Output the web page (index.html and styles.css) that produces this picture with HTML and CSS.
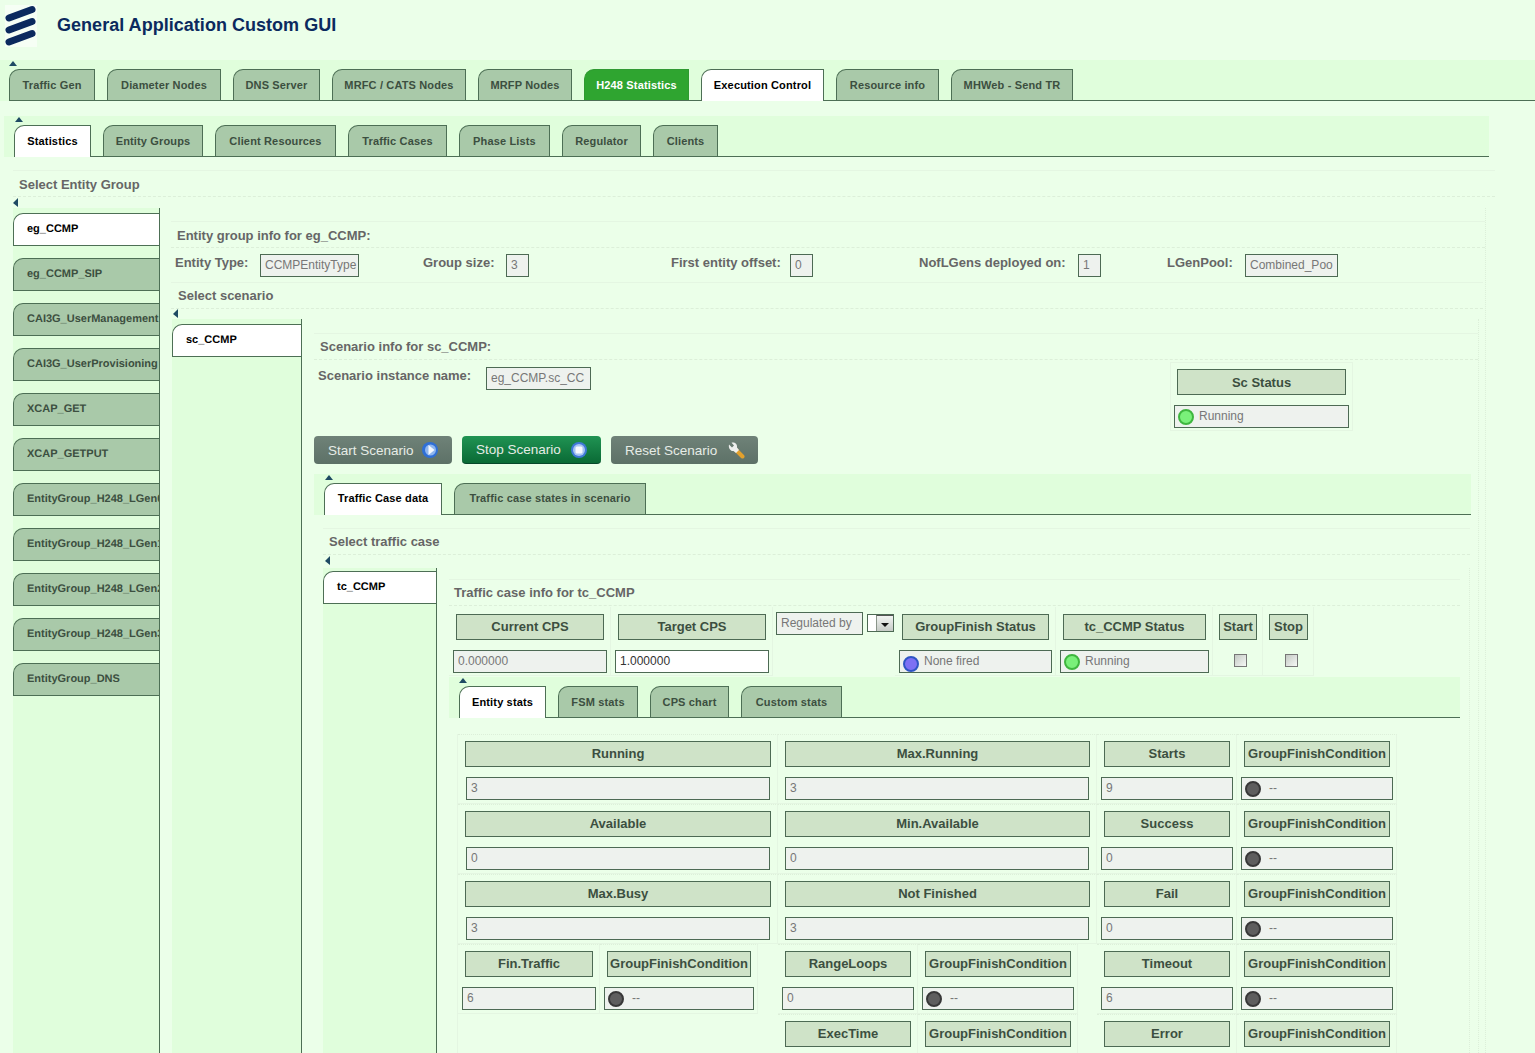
FILE: index.html
```html
<!DOCTYPE html>
<html lang="en">
<head>
    <meta charset="UTF-8">
    <title>General Application Custom GUI</title>
    <link rel="stylesheet" href="styles.css">
</head>
<body>
<div class="page">
    <header class="app-header">
        <svg class="logo" width="32" height="42" viewBox="0 0 32 42">
            <rect width="32" height="42" fill="#f6fff5"/>
            <path d="M4 13 L27 4.5 M4 25 L27 16.5 M4 37 L27 28.5" stroke="#0b2a5e" stroke-width="7" stroke-linecap="round"/>
        </svg>
        <h1>General Application Custom GUI</h1>
    </header>

    <nav class="tabbar tabbar-main">
        <span class="arrow-up"></span>
        <div class="tablist">
            <a class="tab">Traffic Gen</a>
            <a class="tab">Diameter Nodes</a>
            <a class="tab">DNS Server</a>
            <a class="tab">MRFC / CATS Nodes</a>
            <a class="tab">MRFP Nodes</a>
            <a class="tab tab-hot">H248 Statistics</a>
            <a class="tab tab-active">Execution Control</a>
            <a class="tab">Resource info</a>
            <a class="tab">MHWeb - Send TR</a>
        </div>
    </nav>

    <nav class="tabbar tabbar-sub">
        <span class="arrow-up"></span>
        <div class="tablist">
            <a class="tab tab-active">Statistics</a>
            <a class="tab">Entity Groups</a>
            <a class="tab">Client Resources</a>
            <a class="tab">Traffic Cases</a>
            <a class="tab">Phase Lists</a>
            <a class="tab">Regulator</a>
            <a class="tab">Clients</a>
        </div>
    </nav>

    <div class="caption caption-top">Select Entity Group</div>
    <span class="arrow-left arrow-l1"></span>

    <div class="split">
        <div class="vtabs vtabs-l1">
            <a class="vtab vtab-active">eg_CCMP</a>
            <a class="vtab">eg_CCMP_SIP</a>
            <a class="vtab">CAI3G_UserManagement</a>
            <a class="vtab">CAI3G_UserProvisioning</a>
            <a class="vtab">XCAP_GET</a>
            <a class="vtab">XCAP_GETPUT</a>
            <a class="vtab">EntityGroup_H248_LGen0</a>
            <a class="vtab">EntityGroup_H248_LGen1</a>
            <a class="vtab">EntityGroup_H248_LGen2</a>
            <a class="vtab">EntityGroup_H248_LGen3</a>
            <a class="vtab">EntityGroup_DNS</a>
        </div>

        <div class="content content-l1">
            <div class="caption caption-entity">Entity group info for eg_CCMP:</div>
            <div class="info-row">
                <div class="info-item"><label>Entity Type:</label><input class="field w-type" readonly value="CCMPEntityType"></div>
                <div class="info-item"><label>Group size:</label><input class="field w-small" readonly value="3"></div>
                <div class="info-item"><label>First entity offset:</label><input class="field w-small" readonly value="0"></div>
                <div class="info-item"><label>NofLGens deployed on:</label><input class="field w-small" readonly value="1"></div>
                <div class="info-item"><label>LGenPool:</label><input class="field w-pool" readonly value="Combined_Poo"></div>
            </div>
            <div class="caption caption-scenario">Select scenario</div>
            <span class="arrow-left arrow-l2"></span>

            <div class="split">
                <div class="vtabs vtabs-l2">
                    <a class="vtab vtab-active">sc_CCMP</a>
                </div>

                <div class="content content-l2">
                    <div class="caption caption-info">Scenario info for sc_CCMP:</div>
                    <div class="scenario-row">
                        <div class="scenario-name">
                            <label>Scenario instance name:</label>
                            <input class="field w-name" readonly value="eg_CCMP.sc_CC">
                        </div>
                        <div class="cell status-box">
                            <div class="cell-head">Sc Status</div>
                            <div class="field field-status"><span class="dot dot-green"></span>Running</div>
                        </div>
                    </div>

                    <div class="button-row">
                        <button class="btn btn-start" type="button">Start Scenario
                            <svg width="16" height="16" viewBox="0 0 16 16"><circle cx="8" cy="8" r="8" fill="#2f6fd6"/><circle cx="8.5" cy="8" r="5.5" fill="#8fb6ee"/><path d="M6.5 3 L12.5 8 L6.5 13 Z" fill="#f4f8ff"/></svg>
                        </button>
                        <button class="btn btn-stop" type="button">Stop Scenario
                            <svg width="16" height="16" viewBox="0 0 16 16"><circle cx="8" cy="8" r="8" fill="#3f78d8"/><circle cx="8" cy="8" r="6" fill="#a6c4f2"/><rect x="4.5" y="4.5" width="7" height="7" rx="1.5" fill="#f6f9ff"/></svg>
                        </button>
                        <button class="btn btn-reset" type="button">Reset Scenario
                            <svg width="17" height="17" viewBox="0 0 17 17"><path d="M8 8 L14.5 14.5" stroke="#e3a12c" stroke-width="4" stroke-linecap="round"/><path d="M1 2.5 L4 5.5 L6 3.5 L3.5 .8 C6.5 0 9.5 2 9 5.5 L11 8 L8 11 L5.5 9 C2.5 9.5 .2 6 1 2.5 Z" fill="#eef0ee"/></svg>
                        </button>
                    </div>

                    <nav class="tabbar tabbar-scenario">
                        <span class="arrow-up"></span>
                        <div class="tablist">
                            <a class="tab tab-active">Traffic Case data</a>
                            <a class="tab">Traffic case states in scenario</a>
                        </div>
                    </nav>

                    <div class="caption caption-traffic">Select traffic case</div>
                    <span class="arrow-left arrow-l3"></span>

                    <div class="split">
                        <div class="vtabs vtabs-l3">
                            <a class="vtab vtab-active">tc_CCMP</a>
                        </div>

                        <div class="content content-l3">
                            <div class="caption caption-case">Traffic case info for tc_CCMP</div>

                            <div class="case-grid">
                                <div class="cell">
                                    <div class="cell-head">Current CPS</div>
                                    <input class="field" readonly value="0.000000">
                                </div>
                                <div class="cell">
                                    <div class="cell-head">Target CPS</div>
                                    <input class="field field-live" value="1.000000">
                                </div>
                                <div class="regulated">
                                    <input class="field w-regulated" readonly value="Regulated by">
                                    <div class="drop"><span class="drop-btn"></span></div>
                                </div>
                                <div class="cell">
                                    <div class="cell-head">GroupFinish Status</div>
                                    <div class="field field-status"><span class="dot dot-blue"></span>None fired</div>
                                </div>
                                <div class="cell">
                                    <div class="cell-head">tc_CCMP Status</div>
                                    <div class="field field-status"><span class="dot dot-green"></span>Running</div>
                                </div>
                                <div class="cell cell-narrow">
                                    <div class="cell-head">Start</div>
                                    <input class="check" type="checkbox">
                                </div>
                                <div class="cell cell-narrow">
                                    <div class="cell-head">Stop</div>
                                    <input class="check" type="checkbox">
                                </div>
                            </div>

                            <nav class="tabbar tabbar-case">
                                <span class="arrow-up"></span>
                                <div class="tablist">
                                    <a class="tab tab-active">Entity stats</a>
                                    <a class="tab">FSM stats</a>
                                    <a class="tab">CPS chart</a>
                                    <a class="tab">Custom stats</a>
                                </div>
                            </nav>

                            <div class="stats-grid">
                                <div class="cell span-3"><div class="cell-head">Running</div><input class="field field-wide" readonly value="3"></div>
                                <div class="cell span-3"><div class="cell-head">Max.Running</div><input class="field field-wide2" readonly value="3"></div>
                                <div class="cell"><div class="cell-head">Starts</div><input class="field" readonly value="9"></div>
                                <div class="cell"><div class="cell-head">GroupFinishCondition</div><div class="field field-status"><span class="dot dot-off"></span>--</div></div>

                                <div class="cell span-3"><div class="cell-head">Available</div><input class="field field-wide" readonly value="0"></div>
                                <div class="cell span-3"><div class="cell-head">Min.Available</div><input class="field field-wide2" readonly value="0"></div>
                                <div class="cell"><div class="cell-head">Success</div><input class="field" readonly value="0"></div>
                                <div class="cell"><div class="cell-head">GroupFinishCondition</div><div class="field field-status"><span class="dot dot-off"></span>--</div></div>

                                <div class="cell span-3"><div class="cell-head">Max.Busy</div><input class="field field-wide" readonly value="3"></div>
                                <div class="cell span-3"><div class="cell-head">Not Finished</div><input class="field field-wide2" readonly value="3"></div>
                                <div class="cell"><div class="cell-head">Fail</div><input class="field" readonly value="0"></div>
                                <div class="cell"><div class="cell-head">GroupFinishCondition</div><div class="field field-status"><span class="dot dot-off"></span>--</div></div>

                                <div class="cell"><div class="cell-head">Fin.Traffic</div><input class="field" readonly value="6"></div>
                                <div class="cell"><div class="cell-head">GroupFinishCondition</div><div class="field field-status"><span class="dot dot-off"></span>--</div></div>
                                <div class="stats-gap"></div>
                                <div class="cell"><div class="cell-head">RangeLoops</div><input class="field" readonly value="0"></div>
                                <div class="cell"><div class="cell-head">GroupFinishCondition</div><div class="field field-status"><span class="dot dot-off"></span>--</div></div>
                                <div class="stats-gap"></div>
                                <div class="cell"><div class="cell-head">Timeout</div><input class="field" readonly value="6"></div>
                                <div class="cell"><div class="cell-head">GroupFinishCondition</div><div class="field field-status"><span class="dot dot-off"></span>--</div></div>

                                <div class="cell cell-skip"><div class="cell-head">ExecTime</div><input class="field" readonly value="0"></div>
                                <div class="cell"><div class="cell-head">GroupFinishCondition</div><div class="field field-status"><span class="dot dot-off"></span>--</div></div>
                                <div class="stats-gap"></div>
                                <div class="cell"><div class="cell-head">Error</div><input class="field" readonly value="0"></div>
                                <div class="cell"><div class="cell-head">GroupFinishCondition</div><div class="field field-status"><span class="dot dot-off"></span>--</div></div>
                            </div>
                        </div>
                    </div>
                </div>
            </div>
        </div>
    </div>
</div>
</body>
</html>
```

FILE: styles.css
```css
body {
    margin: 0;
    background-color: #ebffe9;
    font-family: "Liberation Sans", Arial, sans-serif;
}

.page {
    height: 1053px;
    display: flex;
    flex-direction: column;
    overflow: hidden;
}

/* Header */
.app-header {
    height: 60px;
    flex: none;
    display: flex;
    align-items: flex-start;
}

.logo {
    margin: 5px 0 0 5px;
}

h1 {
    margin: 14px 0 0 20px;
    font-size: 18px;
    line-height: 22px;
    letter-spacing: 0.03px;
    color: #0b2a5e;
}

/* Horizontal tabs */
.tabbar {
    height: 41px;
    flex: none;
    display: flex;
    flex-direction: column;
    background-color: #e0fedc;
    box-sizing: border-box;
}

.tablist {
    margin-top: auto;
    display: flex;
    gap: 12px;
    height: 32px;
    box-sizing: border-box;
    border-bottom: 1px solid #4d6f55;
}

.tab {
    flex: none;
    height: 31px;
    box-sizing: border-box;
    line-height: 30px;
    text-align: center;
    font-size: 11px;
    font-weight: bold;
    letter-spacing: 0.15px;
    color: #3c4f40;
    white-space: nowrap;
    background-color: #a9c9a9;
    border: 1px solid #4d6f55;
    border-bottom: none;
    border-top-left-radius: 10px;
}

.tab-active {
    height: 32px;
    background-color: #fff;
    color: #000;
}

.tab-hot {
    background-color: #2fa530;
    border-color: #2f9a31;
    color: #fff;
}

/* tab widths differ a bit from what the font gives here, so pin them */
.tabbar-main .tab:nth-child(1) { width: 86px; }
.tabbar-main .tab:nth-child(2) { width: 114px; }
.tabbar-main .tab:nth-child(3) { width: 87px; }
.tabbar-main .tab:nth-child(4) { width: 134px; }
.tabbar-main .tab:nth-child(5) { width: 94px; }
.tabbar-main .tab:nth-child(6) { width: 105px; }
.tabbar-main .tab:nth-child(7) { width: 123px; }
.tabbar-main .tab:nth-child(8) { width: 103px; }
.tabbar-main .tab:nth-child(9) { width: 122px; }

.tabbar-sub .tab:nth-child(1) { width: 77px; }
.tabbar-sub .tab:nth-child(2) { width: 100px; }
.tabbar-sub .tab:nth-child(3) { width: 121px; }
.tabbar-sub .tab:nth-child(4) { width: 99px; }
.tabbar-sub .tab:nth-child(5) { width: 91px; }
.tabbar-sub .tab:nth-child(6) { width: 79px; }
.tabbar-sub .tab:nth-child(7) { width: 65px; }

.tabbar-scenario .tab { line-height: 29px; }
.tabbar-scenario .tab:nth-child(1) { width: 118px; }
.tabbar-scenario .tab:nth-child(2) { width: 192px; }

.tabbar-case .tab:nth-child(1) { width: 87px; }
.tabbar-case .tab:nth-child(2) { width: 80px; }
.tabbar-case .tab:nth-child(3) { width: 79px; }
.tabbar-case .tab:nth-child(4) { width: 101px; }

.arrow-up {
    display: block;
    width: 0;
    height: 0;
    border-left: 4px solid transparent;
    border-right: 4px solid transparent;
    border-bottom: 5px solid #1e4a63;
    margin-top: 1px;
}

.tabbar-main .tablist {
    margin-left: 9px;
}

.tabbar-main .arrow-up {
    margin-left: 9px;
}

.tabbar-sub {
    margin: 15px 0 0 4px;
    width: 1485px;
}

.tabbar-sub .tablist {
    margin-left: 10px;
}

.tabbar-sub .arrow-up {
    margin-left: 11px;
}

.tabbar-scenario {
    margin-top: 10px;
    width: 1157px;
}

.tabbar-scenario .tablist {
    margin-left: 10px;
}

.tabbar-scenario .arrow-up {
    margin-left: 11px;
}

.tabbar-case {
    margin-top: 1px;
    width: 1011px;
}

.tabbar-case .tablist {
    margin-left: 10px;
}

.tabbar-case .arrow-up {
    margin-left: 10px;
}

/* Caption strips */
.caption {
    height: 27px;
    flex: none;
    box-sizing: border-box;
    padding-left: 6px;
    line-height: 26px;
    font-size: 13px;
    font-weight: bold;
    color: #666;
    border-top: 1px solid #e4f6e2;
    border-bottom: 1px dashed #dcefd9;
}

.caption-top {
    margin: 13px 40px 0 13px;
    line-height: 28px;
}

.caption-entity {
    margin-top: 13px;
    line-height: 28px;
}

.caption-scenario {
    padding-left: 7px;
    margin-right: 2px;
}

.caption-info {
    margin-top: 14px;
}

.caption-traffic {
    margin: 13px 8px 0 9px;
    padding-left: 6px;
}

.caption-case {
    margin-top: 11px;
    padding-left: 5px;
    margin-right: 9px;
}

.arrow-left {
    display: block;
    flex: none;
    width: 0;
    height: 0;
    border-top: 5px solid transparent;
    border-bottom: 4px solid transparent;
    border-right: 5px solid #1e4a63;
}

.arrow-l1 {
    margin: 1px 0 1px 13px;
}

.arrow-l2 {
    margin: 0 0 1px 2px;
}

.arrow-l3 {
    margin: 1px 0 3px 11px;
}

/* Nested split panels */
.split {
    flex: 1;
    min-height: 0;
    display: flex;
}

.content {
    display: flex;
    flex-direction: column;
    min-height: 0;
    min-width: 0;
    box-sizing: border-box;
    border-right: 1px dotted #dcefd9;
}

.content-l1 {
    width: 1315px;
    margin-left: 11px;
}

.content-l2 {
    width: 1165px;
    margin-left: 12px;
}

.content-l3 {
    width: 1033px;
    padding-left: 12px;
}

.vtabs {
    flex: none;
    box-sizing: border-box;
    display: flex;
    flex-direction: column;
    gap: 12px;
    background-color: #e0fedc;
    border-right: 1px solid #4d6f55;
}

.vtabs-l1 {
    width: 147px;
    margin-left: 13px;
    padding-top: 5px;
}

.vtabs-l2 {
    width: 130px;
    margin-left: 1px;
    padding-top: 5px;
}

.vtabs-l3 {
    width: 114px;
    margin-left: 9px;
    padding-top: 3px;
}

.vtab {
    flex: none;
    height: 33px;
    box-sizing: border-box;
    padding-left: 13px;
    line-height: 31px;
    font-size: 11px;
    font-weight: bold;
    text-rendering: geometricPrecision;
    color: #3c4f40;
    white-space: nowrap;
    overflow: hidden;
    background-color: #a9c9a9;
    border: 1px solid #4d6f55;
    border-right: none;
    border-top-left-radius: 10px;
}

.vtab-active {
    background-color: #fff;
    color: #000;
}

/* Form bits */
label {
    flex: none;
    font-size: 13px;
    font-weight: bold;
    line-height: 18px;
    color: #666;
    white-space: nowrap;
}

.field {
    display: block;
    height: 23px;
    box-sizing: border-box;
    margin: 0;
    padding: 0 0 2px 4px;
    font-family: "Liberation Sans", Arial, sans-serif;
    font-size: 12px;
    color: #777;
    background-color: #eef2ee;
    border: 1px solid #4d6a54;
    border-radius: 0;
    outline: none;
    min-width: 0;
}

.field-live {
    background-color: #fff;
    color: #333;
}

.field-status {
    display: flex;
    align-items: center;
    gap: 5px;
    padding-left: 3px;
}

.dot {
    flex: none;
    width: 16px;
    height: 16px;
    box-sizing: border-box;
    border-radius: 50%;
    margin-top: 3px;
    border: 2px solid #444;
}

.dot-green {
    background-color: #7af07a;
    border-color: #3fb63f;
}

.dot-blue {
    background-color: #7d70f4;
    border-color: #2f55c4;
    margin-top: 7px;
}

.dot-off {
    background-color: #5e5e5e;
    border-color: #383838;
    margin-right: 3px;
}

.w-type { width: 99px; }
.w-small { width: 23px; }
.w-pool { width: 93px; }
.w-name { width: 105px; }
.w-regulated { width: 87px; }

.info-row {
    flex: none;
    height: 34px;
    box-sizing: border-box;
    padding: 6px 0 0 4px;
    display: grid;
    grid-template-columns: repeat(5, 248px);
}

.info-item {
    display: flex;
}

.info-item:nth-child(1) label { width: 85px; }
.info-item:nth-child(2) label { width: 83px; }
.info-item:nth-child(3) label { width: 119px; }
.info-item:nth-child(4) label { width: 159px; }
.info-item:nth-child(5) label { width: 78px; }

.scenario-row {
    flex: none;
    height: 71px;
    display: flex;
    align-items: flex-start;
}

.scenario-name {
    width: 856px;
    box-sizing: border-box;
    padding: 7px 0 0 4px;
    display: flex;
}

.scenario-name label {
    width: 168px;
}

/* Table-like cells */
.cell {
    box-sizing: border-box;
    padding-top: 7px;
    min-width: 0;
    display: flex;
    flex-direction: column;
    border: 1px solid #e4f6e2;
    border-width: 0 1px 1px 0;
}

.cell > .field {
    margin: 10px 3px 0 4px;
}

.cell > .field-wide {
    margin: 10px 7px 0 8px;
}

.cell > .field-wide2 {
    margin: 10px 7px 0 7px;
}

.cell-head {
    height: 26px;
    margin: 0 6px 0 7px;
    box-sizing: border-box;
    text-align: center;
    font-size: 13px;
    font-weight: bold;
    line-height: 24px;
    white-space: nowrap;
    color: #3c4f40;
    background-color: #cfe3c8;
    border: 1px solid #4d6a54;
}

.cell-narrow .cell-head {
    margin: 0 5px 0 6px;
}

.status-box {
    width: 183px;
    height: 69px;
    margin-top: 2px;
    border-width: 1px;
    padding-top: 6px;
}

.status-box .cell-head {
    margin-left: 6px;
    line-height: 25px;
}

.status-box > .field {
    margin-left: 3px;
}

.button-row {
    flex: none;
    margin-top: 5px;
    display: flex;
    gap: 10px;
}

.btn {
    height: 28px;
    box-sizing: border-box;
    padding: 0 14px;
    display: flex;
    align-items: center;
    justify-content: space-between;
    font-family: "Liberation Sans", Arial, sans-serif;
    font-size: 13.5px;
    color: #e6ece6;
    background: linear-gradient(#6f8278, #5d7167);
    border: none;
    border-radius: 4px;
}

.btn-start { width: 138px; }
.btn-reset { width: 147px; padding-right: 13px; }

.btn-stop {
    width: 139px;
    background: linear-gradient(#209353, #0a6a35);
    border-bottom: 1px solid #06472a;
}

.case-grid {
    flex: none;
    margin-top: 1px;
    height: 69px;
    display: grid;
    grid-template-columns: 162px 162px 122px 161px 157px 50px 51px;
    width: 865px;
}

.regulated {
    padding: 5px 0 0 3px;
    display: flex;
    align-items: flex-start;
    gap: 4px;
}

.drop {
    width: 27px;
    height: 18px;
    margin-top: 2px;
    box-sizing: border-box;
    background-color: #fff;
    border: 1px solid #4d6a54;
    display: flex;
    justify-content: flex-end;
}

.drop-btn {
    width: 17px;
    box-sizing: border-box;
    background: linear-gradient(#f2f4f2, #c6cbc6);
    border-top: 1px solid #555;
    border-left: 1px solid #8a958a;
    position: relative;
}

.drop-btn::after {
    content: "";
    position: absolute;
    left: 4px;
    top: 7px;
    border-left: 4px solid transparent;
    border-right: 4px solid transparent;
    border-top: 4px solid #111;
}

.check {
    appearance: none;
    width: 13px;
    height: 13px;
    box-sizing: border-box;
    margin: 14px 0 0 21px;
    background: linear-gradient(135deg, #c4cac4, #f6f8f6);
    border: 1px solid #777;
}

.cell-narrow:last-child .check {
    margin-left: 22px;
}

.stats-grid {
    flex: none;
    margin: 16px 0 0 8px;
    display: grid;
    grid-template-columns: 142px 158px 20px 140px 160px 19px 140px 160px;
    grid-auto-rows: 70px;
    width: 939px;
    border-left: 1px solid #e4f6e2;
}

.stats-grid .cell {
    border-top: 1px dotted #dcefd9;
    padding-top: 6px;
}

.span-3 {
    grid-column: span 3;
}

.cell-skip {
    grid-column-start: 4;
}
```
